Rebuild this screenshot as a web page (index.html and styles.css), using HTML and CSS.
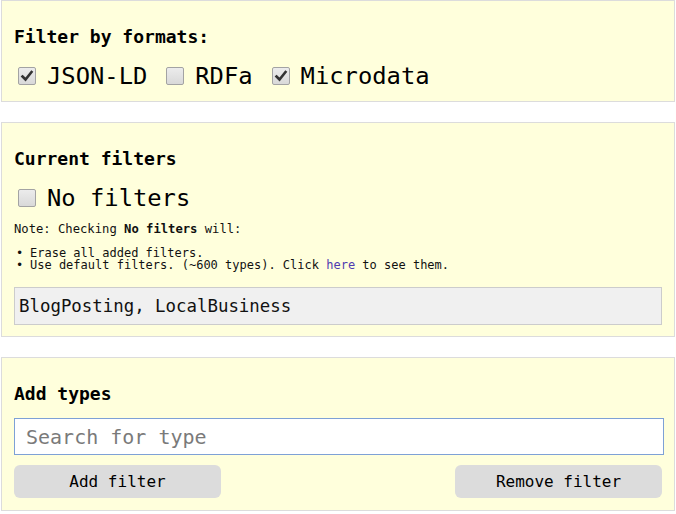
FILE: index.html
```html
<!DOCTYPE html>
<html>
<head>
<meta charset="utf-8">
<link rel="stylesheet" href="styles.css">
</head>
<body>
<div class="page">
  <section class="panel">
    <div class="title">Filter by formats:</div>
    <div class="formats">
      <label class="opt"><span class="cb"><svg viewBox="0 0 18 18" width="18" height="18"><path d="M4.5 9.5 L7.5 12.5 L13.5 5" fill="none" stroke="#333" stroke-width="2.6" stroke-linecap="square"/></svg></span><span>JSON-LD</span></label>
      <label class="opt"><span class="cb"></span><span>RDFa</span></label>
      <label class="opt"><span class="cb"><svg viewBox="0 0 18 18" width="18" height="18"><path d="M4.5 9.5 L7.5 12.5 L13.5 5" fill="none" stroke="#333" stroke-width="2.6" stroke-linecap="square"/></svg></span><span>Microdata</span></label>
    </div>
  </section>

  <section class="panel">
    <div class="title">Current filters</div>
    <div class="formats">
      <label class="opt"><span class="cb"></span><span>No filters</span></label>
    </div>
    <p class="note">Note: Checking <b>No filters</b> will:</p>
    <ul class="list">
      <li><span class="line">Erase all added filters.</span></li>
      <li><span class="line">Use default filters. (~600 types). Click <a href="#">here</a> to see them.</span></li>
    </ul>
    <div class="current">BlogPosting, LocalBusiness</div>
  </section>

  <section class="panel">
    <div class="title">Add types</div>
    <input class="search" type="text" placeholder="Search for type">
    <div class="actions">
      <button class="btn">Add filter</button>
      <button class="btn">Remove filter</button>
    </div>
  </section>
</div>
</body>
</html>
```
FILE: styles.css
```css
html, body {
  margin: 0;
  padding: 0;
  background: #ffffff;
}
body {
  font-family: "DejaVu Sans Mono", "Liberation Mono", monospace;
  color: #000;
}
.page {
  padding: 0 1px;
}
.panel {
  border: 1px solid #dcdcdc;
  background: #ffffdc;
  padding: 25px 12px 11px;
  margin-bottom: 20px;
}
.panel:last-child {
  padding-bottom: 12px;
}
.title {
  font-size: 18px;
  font-weight: bold;
  line-height: 22px;
}
.formats {
  display: flex;
  align-items: center;
  margin-top: 14px;
  font-size: 23.8px;
  line-height: 28px;
}
.opt {
  display: flex;
  align-items: center;
  margin-right: 15px;
}
.cb {
  box-sizing: border-box;
  width: 18px;
  height: 18px;
  margin: 0 11px 0 4px;
  border: 1px solid #a3a3a3;
  border-radius: 2px;
  background: linear-gradient(#ececec, #d9d9d9);
  display: flex;
}
.cb svg {
  margin: -1px;
}
.note {
  margin: 10px 0 0;
  font-size: 12.2px;
  line-height: 15px;
  color: #111;
}
.list {
  margin: 11px 0 0;
  padding: 0 0 0 16px;
  list-style: none;
  font-size: 12px;
  line-height: 11.7px;
  color: #111;
}
.list li {
  position: relative;
  padding-left: 14px;
  margin-left: -14px;
  height: 11.7px;
}
.list li::before {
  content: "\2022";
  position: absolute;
  left: 0;
}
.line {
  display: inline-block;
  height: 11.7px;
  vertical-align: top;
}
.list a {
  color: #4f3cb0;
  text-decoration: none;
}
.current {
  margin-top: 16px;
  border: 1px solid #cccccc;
  background: #f0f0f0;
  padding: 8px 4px;
  font-size: 17.4px;
  line-height: 20px;
  color: #111;
}
.search {
  display: block;
  box-sizing: border-box;
  width: calc(100% + 2px);
  height: 37px;
  margin: 13px 0 0;
  border: 1px solid #7ea1d6;
  background: #fff;
  padding: 0 11px;
  font-family: "DejaVu Sans Mono", "Liberation Mono", monospace;
  font-size: 20px;
  color: #000;
  outline: none;
}
.search::placeholder {
  color: #7a7a7a;
}
.actions {
  display: flex;
  justify-content: space-between;
  margin-top: 10px;
}
.btn {
  width: 207px;
  height: 33px;
  border: none;
  border-radius: 6px;
  background: #dcdcdc;
  font-family: "DejaVu Sans Mono", "Liberation Mono", monospace;
  font-size: 16px;
  color: #000;
  padding: 0;
}
```
